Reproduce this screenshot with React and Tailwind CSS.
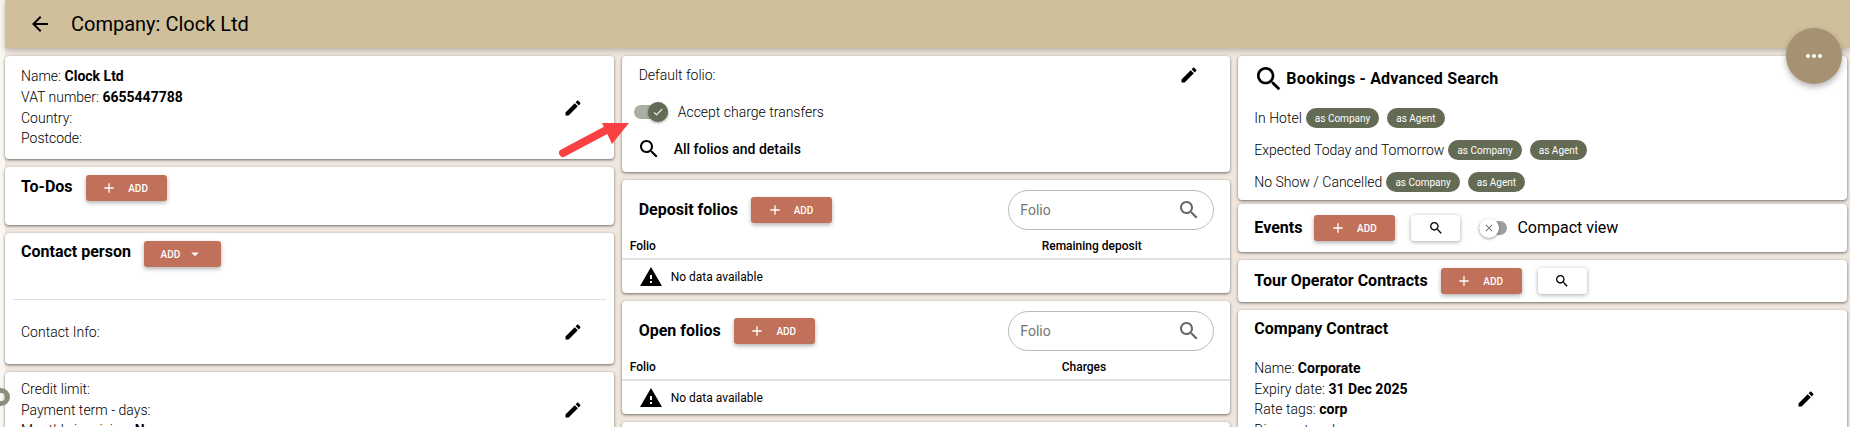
import React from "react";

const P = {
  search: "M15.5 14h-.79l-.28-.27C15.41 12.59 16 11.11 16 9.5 16 5.91 13.09 3 9.5 3S3 5.91 3 9.5 5.91 16 9.5 16c1.61 0 3.09-.59 4.23-1.57l.27.28v.79l5 4.99L20.49 19l-4.99-5zm-6 0C7.01 14 5 11.99 5 9.5S7.01 5 9.5 5 14 7.01 14 9.5 11.99 14 9.5 14z",
  edit: "M3 17.25V21h3.75L17.81 9.94l-3.75-3.75L3 17.25zM20.71 7.04c.39-.39.39-1.02 0-1.41l-2.34-2.34c-.39-.39-1.02-.39-1.41 0l-1.83 1.83 3.75 3.75 1.83-1.83z",
  warn: "M1 21h22L12 2 1 21zm12-3h-2v-2h2v2zm0-4h-2v-4h2v4z",
  back: "M20 11H7.83l5.59-5.59L12 4l-8 8 8 8 1.41-1.41L7.83 13H20v-2z",
  add: "M19 13h-6v6h-2v-6H5v-2h6V5h2v6h6v2z",
  drop: "M7 10l5 5 5-5z",
  more: "M6 10c-1.1 0-2 .9-2 2s.9 2 2 2 2-.9 2-2-.9-2-2-2zm12 0c-1.1 0-2 .9-2 2s.9 2 2 2 2-.9 2-2-.9-2-2-2zm-6 0c-1.1 0-2 .9-2 2s.9 2 2 2 2-.9 2-2-.9-2-2-2z",
  check: "M9 16.17L4.83 12l-1.42 1.41L9 19 21 7l-1.41-1.41z",
  close: "M19 6.41L17.59 5 12 10.59 6.41 5 5 6.41 10.59 12 5 17.59 6.41 19 12 13.41 17.59 19 19 17.59 13.41 12z",
};

function Icon({ d, className }) {
  return (
    <svg viewBox="0 0 24 24" fill="currentColor" className={className}>
      <path d={d} />
    </svg>
  );
}

const Card = ({ className = "", children }) => (
  <div className={"bg-white rounded shadow-[0_1px_3px_rgba(0,0,0,0.55)] " + className}>{children}</div>
);

const AddButton = () => (
  <button className="w-[81px] h-[26px] shrink-0 bg-[#c1705a] rounded-[3px] shadow-[0_2px_4px_rgba(0,0,0,0.3)] flex items-center justify-center gap-[11px] text-white">
    <Icon d={P.add} className="w-[16px] h-[16px] -ml-[3px]" />
    <span className="text-[10px] font-medium">ADD</span>
  </button>
);

const SearchButton = () => (
  <button className="w-[49px] h-[26px] shrink-0 bg-white rounded-[3px] shadow-[0_1px_4px_rgba(0,0,0,0.35)] flex items-center justify-center">
    <Icon d={P.search} className="w-[16px] h-[16px]" />
  </button>
);

const Chip = ({ children }) => (
  <span className="h-[20px] px-[9px] rounded-full bg-[#646b55] text-white text-[10px] flex items-center">{children}</span>
);

const Pencil = ({ className = "" }) => <Icon d={P.edit} className={"w-[20px] h-[20px] shrink-0 " + className} />;

const Line = ({ label, value }) => (
  <div className="h-[20.7px] leading-[20.7px] text-[14px] font-light whitespace-nowrap">
    {label}
    {value && <b className="font-bold"> {value}</b>}
  </div>
);

const Title = ({ children }) => <h2 className="text-[16px] font-bold leading-[24px] whitespace-nowrap">{children}</h2>;

const FolioField = () => (
  <div className="ml-auto w-[206px] h-[40px] rounded-full border border-[#bdbdbd] flex items-center pl-[11px] pr-[12px] justify-between">
    <span className="text-[14px] text-[#757575]">Folio</span>
    <Icon d={P.search} className="w-[24px] h-[24px] text-[#666]" />
  </div>
);

function FolioCard({ title, column, columnClass, className }) {
  return (
    <Card className={className}>
      <div className="h-[60px] flex items-center pl-[17px] pr-[16px] gap-[13px]">
        <Title>{title}</Title>
        <AddButton />
        <FolioField />
      </div>
      <div className="h-[20px] border-b-2 border-[#e0e0e0] relative text-[12px] font-medium pl-[8px] leading-[12px]">
        Folio
        <span className={"absolute top-0 " + columnClass}>{column}</span>
      </div>
      <div className="h-[33px] flex items-center pl-[17px] gap-[8px] text-[12px]">
        <Icon d={P.warn} className="w-[24px] h-[24px]" />
        No data available
      </div>
    </Card>
  );
}

const BookingRow = ({ label }) => (
  <div className="h-[32px] flex items-center gap-[4px] text-[14px] font-light whitespace-nowrap">
    <span>{label}</span>
    <div className="flex gap-[8px] font-normal">
      <Chip>as Company</Chip>
      <Chip>as Agent</Chip>
    </div>
  </div>
);

export default function App() {
  return (
    <div
      className="relative w-[1850px] h-[427px] overflow-hidden bg-[#faf7f3] text-black"
      style={{ fontFamily: "Roboto, 'Liberation Sans', sans-serif" }}
    >
      <div className="ml-[5px] h-[427px] bg-[#efe6dd]">
        <header className="h-[48px] bg-[#cfbf9b] shadow-[0_2px_6px_rgba(0,0,0,0.25)] flex items-center pl-[23px]">
          <Icon d={P.back} className="w-[24px] h-[24px]" />
          <h1 className="ml-[19px] text-[20px] leading-[28px] whitespace-nowrap">Company: Clock Ltd</h1>
        </header>

        <main className="grid grid-cols-3 gap-2 pt-[8px] pr-[3px]">
          <section className="flex flex-col gap-[8px]">
            <Card className="h-[103px] flex items-center justify-between pl-[16px] pr-[31px]">
              <div>
                <Line label="Name:" value="Clock Ltd" />
                <Line label="VAT number:" value="6655447788" />
                <Line label="Country:" />
                <Line label="Postcode:" />
              </div>
              <Pencil />
            </Card>
            <Card className="h-[58px] pl-[16px] pt-[8px] flex items-start gap-[13px]">
              <Title>To-Dos</Title>
              <AddButton />
            </Card>
            <Card className="h-[131px]">
              <div className="h-[66px] pl-[16px] pt-[7px] flex items-start gap-[13px] ">
                <Title>Contact person</Title>
                <button className="mt-[1px] w-[77px] h-[26px] bg-[#c1705a] rounded-[3px] shadow-[0_2px_4px_rgba(0,0,0,0.3)] flex items-center justify-center gap-[6px] text-white">
                  <span className="text-[10px] font-medium">ADD</span>
                  <Icon d={P.drop} className="w-[18px] h-[18px]" />
                </button>
              </div>
              <div className="mx-[8px] border-t border-[#e0e0e0]" />
              <div className="h-[64px] flex items-center justify-between pl-[16px] pr-[31px]">
                <Line label="Contact Info:" />
                <Pencil />
              </div>
            </Card>
            <Card className="flex items-center justify-between pl-[16px] pr-[31px] pt-[7px] pb-[4px]">
              <div>
                <Line label="Credit limit:" />
                <Line label="Payment term - days:" />
                <Line label="Monthly invoicing:" value="No" />
              </div>
              <Pencil />
            </Card>
          </section>

          <section className="flex flex-col gap-[8px]">
            <Card className="h-[116px] pl-[17px] pr-[31px] relative">
              <div className="h-[38px] flex items-center justify-between">
                <span className="text-[14px] font-light">Default folio:</span>
                <Pencil />
              </div>
              <div className="h-[36px] flex items-center gap-[10px] -ml-[5px]">
                <span className="relative w-[34px] h-[14px] rounded-full bg-[#a9b0a3] block">
                  <span className="absolute right-0 -top-[3px] w-[20px] h-[20px] rounded-full bg-[#646b55] text-white flex items-center justify-center shadow-[0_1px_3px_rgba(0,0,0,0.4)]">
                    <Icon d={P.check} className="w-[12px] h-[12px]" />
                  </span>
                </span>
                <span className="text-[14px] font-light whitespace-nowrap">Accept charge transfers</span>
              </div>
              <div className="h-[38px] flex items-center gap-[13px] -ml-[2px]">
                <Icon d={P.search} className="w-[24px] h-[24px]" />
                <span className="text-[14px] font-medium">All folios and details</span>
              </div>
            </Card>
            <FolioCard title="Deposit folios" column="Remaining deposit" columnClass="left-[420px]" className="h-[113px]" />
            <FolioCard title="Open folios" column="Charges" columnClass="left-[440px]" className="h-[113px]" />
            <Card className="h-[40px]" />
          </section>

          <section className="flex flex-col">
            <Card className="h-[144px] pl-[16px]">
              <div className="h-[46px] flex items-center gap-[1px] -ml-[1px]">
                <Icon d={P.search} className="w-[32px] h-[32px] -ml-[0px]" />
                <h2 className="text-[16px] font-bold whitespace-nowrap tracking-[0.2px]">Bookings - Advanced Search</h2>
              </div>
              <BookingRow label="In Hotel" />
              <BookingRow label="Expected Today and Tomorrow" />
              <BookingRow label="No Show / Cancelled" />
            </Card>
            <Card className="mt-[4px] h-[48px] flex items-center pl-[16px]">
              <Title>Events</Title>
              <div className="ml-[12px]"><AddButton /></div>
              <div className="ml-[16px]"><SearchButton /></div>
              <span className="relative ml-[19px] w-[28px] h-[14px] rounded-full bg-[#9e9e9e] block">
                <span className="absolute -left-[0px] -top-[3px] w-[20px] h-[20px] rounded-full bg-white text-[#757575] flex items-center justify-center shadow-[0_1px_3px_rgba(0,0,0,0.4)]">
                  <Icon d={P.close} className="w-[12px] h-[12px]" />
                </span>
              </span>
              <span className="ml-[10px] text-[16px] whitespace-nowrap">Compact view</span>
            </Card>
            <Card className="mt-[8px] h-[42px] flex items-center pl-[16px]">
              <Title>Tour Operator Contracts</Title>
              <div className="ml-[13px]"><AddButton /></div>
              <div className="ml-[16px]"><SearchButton /></div>
            </Card>
            <Card className="mt-[8px] h-[140px] pl-[16px] pr-[31px]">
              <div className="h-[38px] flex items-center"><Title>Company Contract</Title></div>
              <div className="mt-[10px] flex items-center justify-between">
                <div>
                  <Line label="Name:" value="Corporate" />
                  <Line label="Expiry date:" value="31 Dec 2025" />
                  <Line label="Rate tags:" value="corp" />
                  <Line label="Discount code:" />
                </div>
                <Pencil />
              </div>
            </Card>
          </section>
        </main>
      </div>

      {/* floating action button */}
      <button className="absolute left-[1786px] top-[28px] w-[56px] h-[56px] rounded-full bg-[#a69272] text-white flex items-center justify-center shadow-[0_3px_6px_rgba(0,0,0,0.3)]">
        <Icon d={P.more} className="w-[24px] h-[24px]" />
      </button>

      {/* partly hidden ring at the left edge */}
      <span className="absolute -left-[8px] top-[388px] w-[18px] h-[18px] rounded-full border-[5px] border-[#8b8f7e]" />

      {/* annotation arrow */}
      <svg className="absolute left-[555px] top-[115px] w-[80px] h-[48px]" viewBox="555 115 80 48">
        <line x1="563" y1="153" x2="612" y2="127" stroke="#f94144" strokeWidth="8" strokeLinecap="round" />
        <polygon points="602,123 629,123 612,144" fill="#f94144" />
      </svg>
    </div>
  );
}
